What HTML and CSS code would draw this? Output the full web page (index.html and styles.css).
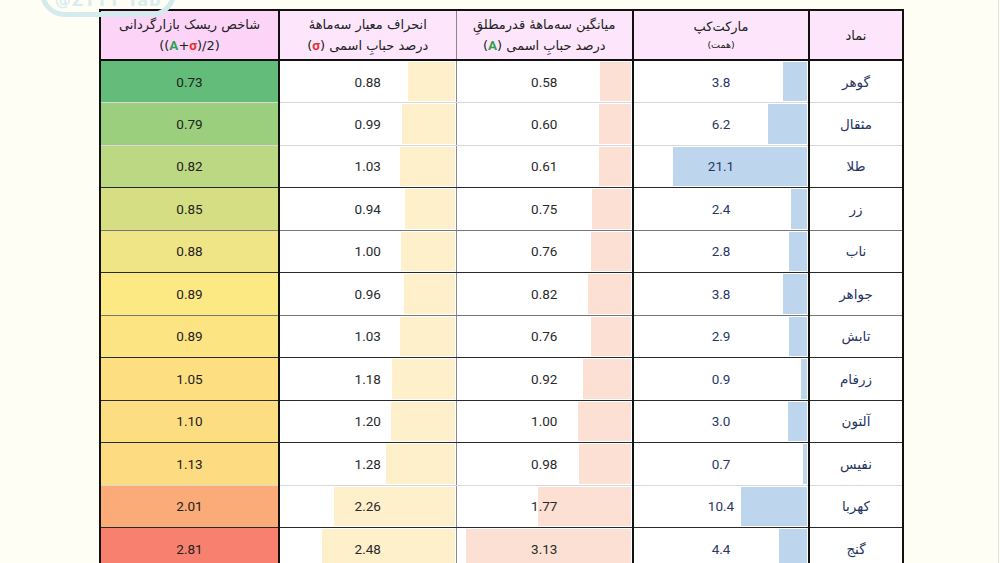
FILE: index.html
```html
<!DOCTYPE html>
<html lang="fa">
<head>
<meta charset="utf-8">
<title>شاخص ریسک بازارگردانی</title>
<link rel="stylesheet" href="styles.css">
</head>
<body>
<div class="page">
  <div class="watermark"><span>@ZTTT Tab</span></div>
  <table class="risk" dir="rtl">
    <colgroup>
      <col class="c-sym"><col class="c-cap"><col class="c-a"><col class="c-s"><col class="c-r">
    </colgroup>
    <thead>
      <tr>
        <th class="h-sym">نماد</th>
        <th class="h-cap"><div class="l1">مارکت‌کپ</div><div class="l2 small">(همت)</div></th>
        <th class="h-a"><div class="l1">میانگین سه‌ماههٔ قدرمطلقِ</div><div class="l2">درصد حبابِ اسمی (<b class="ga">A</b>)</div></th>
        <th class="h-s"><div class="l1">انحراف معیار سه‌ماههٔ</div><div class="l2">درصد حبابِ اسمی (<b class="rs">σ</b>)</div></th>
        <th class="h-r"><div class="l1">شاخص ریسک بازارگردانی</div><div class="l2"><span dir="ltr">((<b class="ga">A</b>+<b class="rs">σ</b>)/2)</span></div></th>
      </tr>
    </thead>
    <tbody>
      <tr class="ln-light"><td class="sym">گوهر</td><td class="cap" style="--w:24px">3.8</td><td class="av" style="--w:31px">0.58</td><td class="sd" style="--w:47px">0.88</td><td class="rk r1">0.73</td></tr>
      <tr class="ln-light"><td class="sym">مثقال</td><td class="cap" style="--w:39px">6.2</td><td class="av" style="--w:32px">0.60</td><td class="sd" style="--w:53px">0.99</td><td class="rk r2">0.79</td></tr>
      <tr class="ln-dark"><td class="sym">طلا</td><td class="cap" style="--w:134px">21.1</td><td class="av" style="--w:32px">0.61</td><td class="sd" style="--w:55px">1.03</td><td class="rk r3">0.82</td></tr>
      <tr class="ln-mid"><td class="sym">زر</td><td class="cap" style="--w:16px">2.4</td><td class="av" style="--w:39px">0.75</td><td class="sd" style="--w:50px">0.94</td><td class="rk r4">0.85</td></tr>
      <tr class="ln-dark"><td class="sym">ناب</td><td class="cap" style="--w:18px">2.8</td><td class="av" style="--w:40px">0.76</td><td class="sd" style="--w:54px">1.00</td><td class="rk r5">0.88</td></tr>
      <tr class="ln-mid"><td class="sym">جواهر</td><td class="cap" style="--w:24px">3.8</td><td class="av" style="--w:43px">0.82</td><td class="sd" style="--w:51px">0.96</td><td class="rk r6">0.89</td></tr>
      <tr class="ln-dark"><td class="sym">تابش</td><td class="cap" style="--w:18px">2.9</td><td class="av" style="--w:40px">0.76</td><td class="sd" style="--w:55px">1.03</td><td class="rk r7">0.89</td></tr>
      <tr class="ln-dark"><td class="sym">زرفام</td><td class="cap" style="--w:6px">0.9</td><td class="av" style="--w:48px">0.92</td><td class="sd" style="--w:63px">1.18</td><td class="rk r8">1.05</td></tr>
      <tr class="ln-dark"><td class="sym">آلتون</td><td class="cap" style="--w:19px">3.0</td><td class="av" style="--w:53px">1.00</td><td class="sd" style="--w:64px">1.20</td><td class="rk r9">1.10</td></tr>
      <tr class="ln-light"><td class="sym">نفیس</td><td class="cap" style="--w:4px">0.7</td><td class="av" style="--w:52px">0.98</td><td class="sd" style="--w:69px">1.28</td><td class="rk r10">1.13</td></tr>
      <tr class="ln-dark"><td class="sym">کهربا</td><td class="cap" style="--w:66px">10.4</td><td class="av" style="--w:93px">1.77</td><td class="sd" style="--w:121px">2.26</td><td class="rk r11">2.01</td></tr>
      <tr class="ln-dark"><td class="sym">گنج</td><td class="cap" style="--w:28px">4.4</td><td class="av" style="--w:165px">3.13</td><td class="sd" style="--w:133px">2.48</td><td class="rk r12">2.81</td></tr>
    </tbody>
  </table>
</div>
</body>
</html>
```

FILE: styles.css
```css
html, body {
  margin: 0;
  padding: 0;
  background: #fffef4;
}

.page {
  position: relative;
  width: 999px;
  height: 563px;
  overflow: hidden;
  border-right: 1px solid #e4e4dc;
  padding-top: 9px;
  box-sizing: border-box;
}

.watermark {
  position: absolute;
  left: 40px;
  top: -32px;
  width: 136px;
  height: 49px;
  box-sizing: border-box;
  border: 5px solid #d4ebee;
  border-radius: 26px;
  display: flex;
  align-items: flex-end;
  justify-content: center;
  overflow: hidden;
}

.watermark span {
  font-family: "DejaVu Sans", sans-serif;
  font-weight: bold;
  font-size: 16px;
  color: #d9edf0;
  line-height: 16px;
  margin-bottom: 3px;
  letter-spacing: 1px;
}

.risk {
  margin-left: 99px;
  border-collapse: collapse;
  table-layout: fixed;
  width: 803px;
  border: 2px solid #111;
  font-family: Roboto, "DejaVu Sans", sans-serif;
  font-size: 13.5px;
  color: #2a2a2a;
}

.c-sym { width: 94px; }
.c-cap { width: 176px; }
.c-a { width: 177px; }
.c-s { width: 177px; }
.c-r { width: 179px; }

thead tr {
  height: 50px;
}

th {
  font-family: "DejaVu Sans", sans-serif;
  font-weight: normal;
  font-size: 13px;
  color: #222;
  background: #fde6fb;
  border-bottom: 2px solid #111;
  padding: 0 2px;
  text-align: center;
  vertical-align: middle;
}

th .l1, th .l2 {
  line-height: 20px;
  white-space: nowrap;
}

th .small {
  font-size: 9.5px;
  line-height: 16px;
}

th.h-r {
  background: #fbd4f8;
}

th b {
  font-family: Roboto, "DejaVu Sans", sans-serif;
  font-weight: bold;
  font-size: 13.5px;
}

.ga { color: #2fa24b; }
.rs { color: #e8302a; }

.h-sym, .sym { border-left: 2px solid #111; }
.h-cap, .cap { border-left: 2px solid #111; }
.h-a, .av { border-left: 1px solid #8a8a8a; }
.h-s, .sd { border-left: 2px solid #111; }

tbody tr {
  height: 42.5px;
}

td {
  padding: 0;
  text-align: center;
  vertical-align: middle;
  background-color: #fff;
}

tr.ln-light td { border-bottom: 1px solid #d9d9d9; }
tr.ln-mid td { border-bottom: 1px solid #777; }
tr.ln-dark td { border-bottom: 1px solid #2a2a2a; }

.sym {
  font-family: "DejaVu Sans", sans-serif;
  font-size: 13.5px;
  color: #26345e;
}

.cap, .av, .sd {
  background-repeat: no-repeat;
  background-position: right 1px center;
  background-size: var(--w) calc(100% - 2px);
}

.cap {
  color: #2a3766;
  background-image: linear-gradient(#bdd6ed, #bdd6ed);
}

.av {
  background-image: linear-gradient(#fce0d3, #fce0d3);
}

.sd {
  background-image: linear-gradient(#fff0cc, #fff0cc);
}

.rk { color: #222; }
.r1 { background-color: #63bc79; }
.r2 { background-color: #9ccf7d; }
.r3 { background-color: #bcd882; }
.r4 { background-color: #d5de83; }
.r5 { background-color: #efe486; }
.r6 { background-color: #fce984; }
.r7 { background-color: #fde482; }
.r8 { background-color: #fddf82; }
.r9 { background-color: #fddd82; }
.r10 { background-color: #fddb81; }
.r11 { background-color: #fbab77; }
.r12 { background-color: #f8806e; }
```
